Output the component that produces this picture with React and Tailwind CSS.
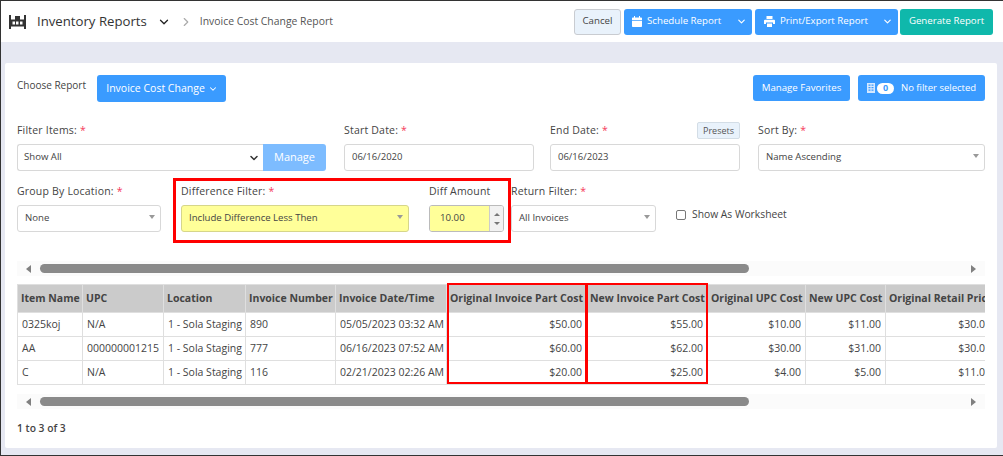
import { ChevronDown, ChevronRight } from "lucide-react";

const columns = [
  { label: "Item Name", width: "w-[65px]" },
  { label: "UPC", width: "w-[81px]" },
  { label: "Location", width: "w-[82px]" },
  { label: "Invoice Number", width: "w-[90px]" },
  { label: "Invoice Date/Time", width: "w-[111px]" },
  { label: "Original Invoice Part Cost", width: "w-[140px]", right: true },
  { label: "New Invoice Part Cost", width: "w-[121px]", right: true },
  { label: "Original UPC Cost", width: "w-[98px]", right: true },
  { label: "New UPC Cost", width: "w-[80px]", right: true },
  { label: "Original Retail Price", width: "w-[110px]", right: true },
];

const rows = [
  ["0325koj", "N/A", "1 - Sola Staging", "890", "05/05/2023 03:32 AM", "$50.00", "$55.00", "$10.00", "$11.00", "$30.00"],
  ["AA", "000000001215", "1 - Sola Staging", "777", "06/16/2023 07:52 AM", "$60.00", "$62.00", "$30.00", "$31.00", "$30.00"],
  ["C", "N/A", "1 - Sola Staging", "116", "02/21/2023 02:26 AM", "$20.00", "$25.00", "$4.00", "$5.00", "$11.00"],
];

function Req({ label }) {
  return (
    <label className="block h-[14px] text-[10.5px] leading-[14px] font-medium text-[#444] whitespace-nowrap tracking-[0.2px]">
      {label} <span className="text-[#f5385a]">*</span>
    </label>
  );
}

function Caret() {
  return <span className="absolute right-[5px] top-[9px] border-x-[3.5px] border-t-[4px] border-x-transparent border-t-[#999]" />;
}

function SelectBox({ value, className = "bg-white border-[#d8d8d8]" }) {
  return (
    <div className={`relative mt-[7px] flex h-[27px] items-center rounded-[3px] border pl-[7px] text-[9.6px] text-[#444] ${className}`}>
      {value}
      <Caret />
    </div>
  );
}

function Scrollbar() {
  return (
    <div className="flex h-[15px] items-center bg-[#fbfbfb]">
      <span className="ml-[9px] border-y-[4.5px] border-r-[5px] border-y-transparent border-r-[#808080]" />
      <div className="ml-[9px] h-[9px] w-[709px] rounded-full bg-[#8a8a8a]" />
      <span className="ml-auto mr-[9px] border-y-[4.5px] border-l-[5px] border-y-transparent border-l-[#808080]" />
    </div>
  );
}

function ReportTable() {
  return (
    <div className="relative mt-[8px]">
      <div className="overflow-hidden">
        <table className="w-[978px] table-fixed border-collapse text-[10.5px] text-[#444]">
          <thead>
            <tr className="h-[28px] bg-[#cbcbcb]">
              {columns.map((col) => (
                <th key={col.label} className={`${col.width} overflow-hidden border border-[#dfdfdf] px-[3px] text-left font-bold whitespace-nowrap ${col.right ? "text-right" : ""}`}>
                  {col.label}
                </th>
              ))}
            </tr>
          </thead>
          <tbody>
            {rows.map((row) => (
              <tr key={row[0]} className="h-[24px]">
                {row.map((cell, i) => (
                  <td key={i} className={`overflow-hidden border border-[#dfdfdf] px-[4px] whitespace-nowrap ${columns[i].right ? "text-right" : ""}`}>
                    {cell}
                  </td>
                ))}
              </tr>
            ))}
          </tbody>
        </table>
      </div>
      <div className="absolute left-[430px] top-[-1px] h-[101px] w-[140px] border-2 border-[#f00]" />
      <div className="absolute left-[569px] top-[-1px] h-[101px] w-[122px] border-2 border-[#f00]" />
    </div>
  );
}

export default function App() {
  return (
    <div className="h-[456px] w-[1003px] overflow-hidden border-y border-l border-[#333] bg-[#e6e8f2] font-['Open_Sans',sans-serif]">
      <header className="flex h-[41px] items-center bg-white pl-[8px] pr-[10px]">
        <svg viewBox="0 0 17 14" className="h-[14px] w-[17px]" fill="#333">
          <path d="M0 0h2v14H0zM15 0h2v14h-2zM6 1h5v3.500H6zM2 4.500h13v7H2z" />
          <path d="M3.500 6.500h2.500v3H3.500zM7 6.500h2.500v3H7zM11 6.500h2.500v3H11z" fill="#fff" />
        </svg>
        <span className="ml-[11px] text-[13.2px] text-[#333]">Inventory Reports</span>
        <ChevronDown size={14} strokeWidth={2.2} className="ml-[10px] text-[#222]" />
        <ChevronRight size={14} className="ml-[8px] text-[#aaa]" />
        <span className="ml-[7px] text-[10.4px] text-[#555]">Invoice Cost Change Report</span>

        <div className="ml-auto flex items-center text-[9.7px] text-white">
          <button className="h-[26px] w-[47px] rounded-[3px] border border-[#c9ccd1] bg-[#e9f2fb] text-[#444]">Cancel</button>
          <div className="ml-[3px] flex h-[26px] w-[128px] items-center rounded-[3px] bg-[#3a9bff] pl-[8px]">
            <svg viewBox="0 0 10 11" className="h-[11px] w-[10px]" fill="#fff">
              <path d="M2 0h1v1.500h4V0h1v1.500h1.200q.8 0 .8.8V4H0V2.300q0-.8.8-.8H2zM0 4.700h10v5.500q0 .8-.8.8H.8q-.8 0-.8-.8z" />
            </svg>
            <span className="ml-[5px]">Schedule Report</span>
            <ChevronDown size={11} strokeWidth={2.5} className="ml-auto mr-[5px]" />
          </div>
          <div className="ml-[3px] flex h-[26px] w-[143px] items-center rounded-[3px] bg-[#3a9bff] pl-[9px]">
            <svg viewBox="0 0 11 11" className="h-[11px] w-[11px]" fill="#fff">
              <path d="M2.500 0h6v3h-6zM1 3.800h9q1 0 1 1V8H9V6.500H2V8H0V4.800q0-1 1-1zM3 7.500h5V11H3z" />
            </svg>
            <span className="ml-[5px]">Print/Export Report</span>
            <ChevronDown size={11} strokeWidth={2.5} className="ml-auto mr-[5px]" />
          </div>
          <button className="ml-[2px] h-[26px] w-[93px] rounded-[3px] bg-[#0fb8ab]">Generate Report</button>
        </div>
      </header>

      <main className="mx-[4px] mt-[21px] h-[385px] w-[992px] rounded-[2px] bg-white px-[12px]">
        <section className="flex pt-[12px]">
          <span className="mt-[3px] text-[10px] leading-[14px] text-[#444]">Choose Report</span>
          <button className="ml-[11px] flex h-[27px] w-[129px] items-center justify-center gap-[3px] rounded-[3px] bg-[#3a9bff] pl-[1px] text-[10.5px] text-white">
            Invoice Cost Change <ChevronDown size={10} strokeWidth={2.5} />
          </button>
          <button className="ml-auto h-[26px] w-[97px] rounded-[3px] bg-[#3a9bff] text-[9.7px] text-white">Manage Favorites</button>
          <button className="ml-[8px] flex h-[26px] w-[127px] items-center rounded-[3px] bg-[#3a9bff] pl-[9px] text-[9.5px] text-white">
            <svg viewBox="0 0 8 10" className="h-[10px] w-[8px]" fill="#d5e8ff">
              <path d="M0 0h8v10H0zM1.500 1.500v1.200h2V1.500zm3 0v1.200h2V1.500zM1.500 4v1.200h2V4zm3 0v1.200h2V4zM1.500 6.500v1.200h2V6.500zm3 0v1.200h2V6.500z" fillRule="evenodd" />
            </svg>
            <span className="ml-[2px] flex h-[11px] w-[17px] items-center justify-center rounded-full bg-white text-[9px] font-bold text-[#3a9bff]">0</span>
            <span className="ml-[7px]">No filter selected</span>
          </button>
        </section>

        <section className="mt-[21px] flex">
          <div className="w-[309px]">
            <Req label="Filter Items:" />
            <div className="mt-[7px] flex h-[27px]">
              <div className="flex flex-1 items-center rounded-l-[3px] border border-r-0 border-[#d8d8d8] pl-[6px] text-[9.6px] text-[#444]">
                Show All
                <ChevronDown size={12} strokeWidth={3} className="ml-auto mr-[3px] text-[#333]" />
              </div>
              <div className="flex w-[63px] items-center justify-center rounded-r-[3px] bg-[#7dbcff] text-[11px] text-white">Manage</div>
            </div>
          </div>
          <div className="ml-[18px] w-[190px]">
            <Req label="Start Date:" />
            <div className="mt-[7px] flex h-[27px] items-center rounded-[3px] border border-[#d8d8d8] pl-[7px] text-[9.5px] text-[#444]">06/16/2020</div>
          </div>
          <div className="relative ml-[16px] w-[190px]">
            <Req label="End Date:" />
            <span className="absolute right-0 top-[-1px] flex h-[17px] w-[43px] items-center justify-center rounded-[2px] border border-[#d3dde6] bg-[#e9f2fb] text-[9px] text-[#555]">Presets</span>
            <div className="mt-[7px] flex h-[27px] items-center rounded-[3px] border border-[#d8d8d8] pl-[7px] text-[9.5px] text-[#444]">06/16/2023</div>
          </div>
          <div className="ml-[18px] w-[227px]">
            <Req label="Sort By:" />
            <SelectBox value="Name Ascending" />
          </div>
        </section>

        <section className="relative mt-[13px] flex">
          <div className="w-[144px]">
            <Req label="Group By Location:" />
            <SelectBox value="None" />
          </div>
          <div className="ml-[20px] w-[228px]">
            <Req label="Difference Filter:" />
            <SelectBox value="Include Difference Less Then" className="border-[#d6d68a] bg-[#ffff99]" />
          </div>
          <div className="ml-[20px] w-[75px]">
            <label className="block h-[14px] text-[10.5px] leading-[14px] font-medium text-[#444] whitespace-nowrap tracking-[0.2px]">Diff Amount</label>
            <div className="mt-[7px] flex h-[27px] overflow-hidden rounded-[3px] border border-[#bbb]">
              <div className="flex flex-1 items-center bg-[#ffff99] pl-[10px] text-[9.7px] text-[#444]">10.00</div>
              <div className="flex w-[14px] flex-col items-center justify-center gap-[6px] border-l border-[#ccc] bg-[#f2f2f2]">
                <span className="border-x-[3px] border-b-[3px] border-x-transparent border-b-[#777]" />
                <span className="border-x-[3px] border-t-[3px] border-x-transparent border-t-[#777]" />
              </div>
            </div>
          </div>
          <div className="ml-[7px] w-[145px]">
            <Req label="Return Filter:" />
            <SelectBox value="All Invoices" />
          </div>
          <label className="ml-[20px] mt-[24px] flex h-[14px] items-center text-[10.3px] text-[#444]">
            <span className="h-[10px] w-[10px] rounded-[2px] border border-[#777] bg-white" />
            <span className="ml-[6px]">Show As Worksheet</span>
          </label>
          <div className="absolute left-[156px] top-[-6px] h-[65px] w-[338px] border-[3px] border-[#f00]" />
        </section>

        <section className="mt-[29px] w-[968px]">
          <Scrollbar />
          <ReportTable />
          <div className="mt-[9px]">
            <Scrollbar />
          </div>
          <p className="mt-[12px] text-[10.3px] leading-[14px] font-semibold text-[#444]">1 to 3 of 3</p>
        </section>
      </main>
    </div>
  );
}
